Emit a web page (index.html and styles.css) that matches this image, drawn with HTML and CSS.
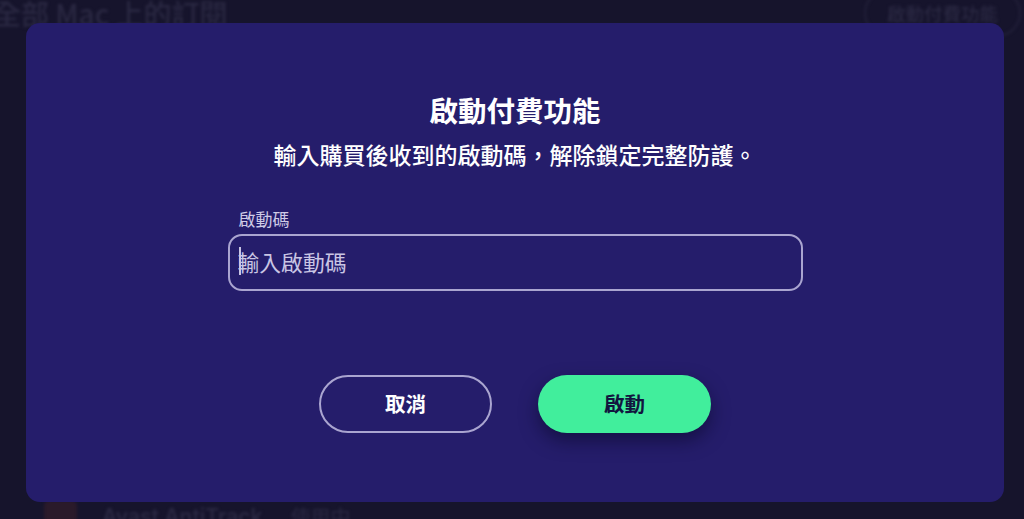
FILE: index.html
```html
<!DOCTYPE html>
<html lang="zh-Hant">
<head>
    <meta charset="UTF-8">
    <meta name="viewport" content="width=device-width, initial-scale=1.0">
    <title>啟動付費功能</title>
    <link rel="stylesheet" href="styles.css">
</head>
<body>
    <!-- Page behind the dialog -->
    <div class="page">
        <div class="page-header">
            <h2 class="page-title">全部 Mac 上的訂閱</h2>
            <span class="page-button">啟動付費功能</span>
        </div>
        <div class="page-row">
            <span class="row-icon"></span>
            <span class="row-name">Avast AntiTrack</span>
            <span class="row-status">使用中</span>
        </div>
    </div>

    <div class="overlay">
        <div class="modal">
            <h1 class="modal-title">啟動付費功能</h1>
            <p class="modal-text">輸入購買後收到的啟動碼，解除鎖定完整防護。</p>

            <div class="field">
                <label class="field-label" for="code">啟動碼</label>
                <div class="field-box">
                    <span class="caret"></span>
                    <input id="code" class="field-input" type="text" placeholder="輸入啟動碼">
                </div>
            </div>

            <div class="actions">
                <button class="btn btn-cancel">取消</button>
                <button class="btn btn-primary">啟動</button>
            </div>
        </div>
    </div>
</body>
</html>
```

FILE: styles.css
```css
* {
    box-sizing: border-box;
}
html, body {
    height: 100%;
}
body {
    margin: 0;
    overflow: hidden;
    background-color: #16142c;
    font-family: "Noto Sans CJK TC", "Noto Sans", sans-serif;
    color: white;
}
.page {
    display: flex;
    flex-direction: column;
    justify-content: space-between;
    height: 100%;
    filter: blur(1.4px);
    color: #2a2842;
}
.page-header {
    display: flex;
    justify-content: space-between;
    align-items: center;
    height: 40px;
    margin-top: -7px;
    padding: 0 3px 0 0;
}
.page-title {
    margin: 0 0 0 -7px;
    font-size: 28px;
    font-weight: 500;
}
.page-button {
    padding: 4px 21px;
    border: 2px solid #211f38;
    border-radius: 28px;
    font-size: 18.5px;
    line-height: 36px;
    font-weight: 500;
}
.page-row {
    display: flex;
    align-items: center;
    gap: 25px;
    height: 36px;
    margin-bottom: -15px;
    padding-left: 44px;
}
.row-icon {
    width: 33px;
    height: 33px;
    border-radius: 6px;
    background: #2a1a2a;
}
.row-name {
    margin-right: 3px;
    font-family: "Inter", sans-serif;
    font-size: 21px;
    font-weight: 600;
}
.row-status {
    font-size: 20px;
}
.overlay {
    position: fixed;
    top: 0;
    left: 0;
    width: 100%;
    height: 100%;
    padding: 23px 20px 17px 26px;
}
.modal {
    display: flex;
    flex-direction: column;
    align-items: center;
    height: 100%;
    padding-top: 67px;
    background: #251d6b;
    border-radius: 14px;
}
.modal-title {
    margin: 0;
    font-size: 28.5px;
    line-height: 40px;
    font-weight: 700;
}
.modal-text {
    margin: 7px 0 0;
    font-size: 23px;
    line-height: 34px;
    font-weight: 500;
}
.field {
    width: 575px;
    margin-top: 36px;
}
.field-label {
    display: block;
    padding-left: 11px;
    margin-bottom: 3px;
    font-size: 17px;
    line-height: 24px;
    color: #cfcbe6;
}
.field-box {
    display: flex;
    align-items: center;
    height: 57px;
    padding-left: 10px;
    padding-bottom: 3px;
    border: 2px solid #aaa5d0;
    border-radius: 14px;
}
.caret {
    width: 2px;
    height: 28px;
    margin-right: -3px;
    margin-left: -1px;
    background: #c9c5e4;
}
.field-input {
    flex: 1;
    min-width: 0;
    padding: 0;
    border: none;
    outline: none;
    background: transparent;
    color: white;
    font-family: inherit;
    font-size: 21.8px;
}
.field-input::placeholder {
    color: #c9c5e4;
    opacity: 1;
}
.actions {
    display: flex;
    gap: 46px;
    margin-top: 84px;
}
.btn {
    width: 173px;
    height: 58px;
    padding-bottom: 3px;
    border-radius: 29px;
    font-family: inherit;
    font-size: 20.5px;
    font-weight: 700;
    cursor: pointer;
}
.btn-cancel {
    background: transparent;
    border: 2px solid #aaa5d0;
    color: white;
}
.btn-primary {
    background: #41ee9c;
    border: none;
    color: #12163f;
    box-shadow: 0 8px 18px rgba(10, 8, 40, 0.55);
}
```
